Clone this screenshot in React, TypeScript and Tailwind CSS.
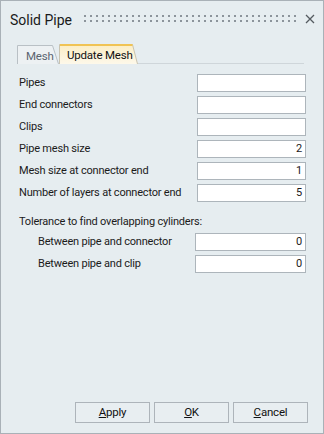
import React from "react";

function Field({ value, w = "w-[109px]" }: { value?: string; w?: string }) {
  return (
    <div
      className={`${w} h-[18px] bg-white border border-[#adb5bb] flex items-center justify-end pr-[3px] text-[11px] text-[#1b1b1b]`}
    >
      {value}
    </div>
  );
}

function Row({ label, value, indent, w }: { label: string; value?: string; indent?: boolean; w?: string }) {
  return (
    <div className="flex items-center justify-between h-[18px]">
      <span className={indent ? "pl-[19px]" : ""}>{label}</span>
      <Field value={value} w={w} />
    </div>
  );
}

function Btn({ pre, rest }: { pre: string; rest: string }) {
  return (
    <button className="w-[75px] h-[21px] border border-[#adb4ba] bg-[#e8eef1] text-[11.5px] tracking-[-0.2px] text-[#111] flex items-center justify-center">
      <span>
        <u className="underline-offset-[1px]">{pre}</u>
        {rest}
      </span>
    </button>
  );
}

export default function App() {
  return (
    <div className="w-[324px] h-[434px] bg-[#e6edf0] border border-[#a9b1b7] flex flex-col font-[family-name:Roboto,sans-serif] text-[#1b1b1b] overflow-hidden">
      {/* title bar */}
      <div className="flex items-center h-[38px] pl-[9px] shrink-0">
        <span className="text-[14px] text-[#1a1a1a] w-[74px]">Solid Pipe</span>
        <svg width="214" height="8" className="shrink-0 mt-[-2px]">
          <defs>
            <pattern id="dots" width="6" height="5" patternUnits="userSpaceOnUse">
              <rect x="0" y="0" width="2" height="2" fill="#8c949b" />
            </pattern>
          </defs>
          <rect x="0" y="0" width="214" height="7" fill="url(#dots)" />
        </svg>
        <svg width="10" height="10" className="ml-[7px] mt-[-2px]" viewBox="0 0 10 10">
          <path d="M1 1 L9 9 M9 1 L1 9" stroke="#555b60" strokeWidth="1.3" />
        </svg>
      </div>

      {/* tabs */}
      <div className="flex items-end h-[21px] mt-[4px] ml-[16px] mr-[19px] shrink-0">
        <div className="relative w-[42px] h-[19px] shrink-0">
          <svg className="absolute inset-0" width="42" height="19">
            <path d="M0.5 19 L0.5 0.5 L35.5 0.5 L41.5 19" fill="#edf1f3" stroke="#b9c0c5" />
          </svg>
          <span className="relative block pl-[9px] pt-[3px] text-[11.5px] tracking-[-0.2px] text-[#5a6470]">Mesh</span>
        </div>
        <div className="relative w-[79px] h-[20px] shrink-0">
          <svg className="absolute inset-0" width="79" height="20">
            <defs>
              <linearGradient id="tg" x1="0" y1="0" x2="0" y2="1">
                <stop offset="0" stopColor="#fbedc4" />
                <stop offset="1" stopColor="#fdf8ea" />
              </linearGradient>
            </defs>
            <path d="M0.5 20 L0.5 0.5 L73.5 0.5 L78.5 20" fill="url(#tg)" stroke="#c9c3b0" />
            <path d="M1 1 L73.5 1" stroke="#f0c354" strokeWidth="2" />
          </svg>
          <span className="relative block pl-[8px] pt-[3px] text-[11.5px] tracking-[-0.2px] text-[#111]">Update Mesh</span>
        </div>
        <div className="flex-1 border-b border-[#cfd6da]" />
      </div>

      {/* content */}
      <div className="flex flex-col pl-[18px] pr-[17px] mt-[10px] text-[11px] tracking-[-0.2px]">
        <div className="flex flex-col gap-[4px]">
          <Row label="Pipes" />
          <Row label="End connectors" />
          <Row label="Clips" />
          <Row label="Pipe mesh size" value="2" />
          <Row label="Mesh size at connector end" value="1" />
          <Row label="Number of layers at connector end" value="5" />
        </div>
        <div className="h-[16px] mt-[12px] flex items-center">Tolerance to find overlapping cylinders:</div>
        <div className="flex flex-col gap-[4px] mt-[3px]">
          <Row label="Between pipe and connector" value="0" indent w="w-[111px]" />
          <Row label="Between pipe and clip" value="0" indent w="w-[111px]" />
        </div>
      </div>

      {/* buttons */}
      <div className="mt-auto flex justify-end gap-[4px] pr-[15px] mb-[10px]">
        <Btn pre="A" rest="pply" />
        <Btn pre="O" rest="K" />
        <Btn pre="C" rest="ancel" />
      </div>
    </div>
  );
}
